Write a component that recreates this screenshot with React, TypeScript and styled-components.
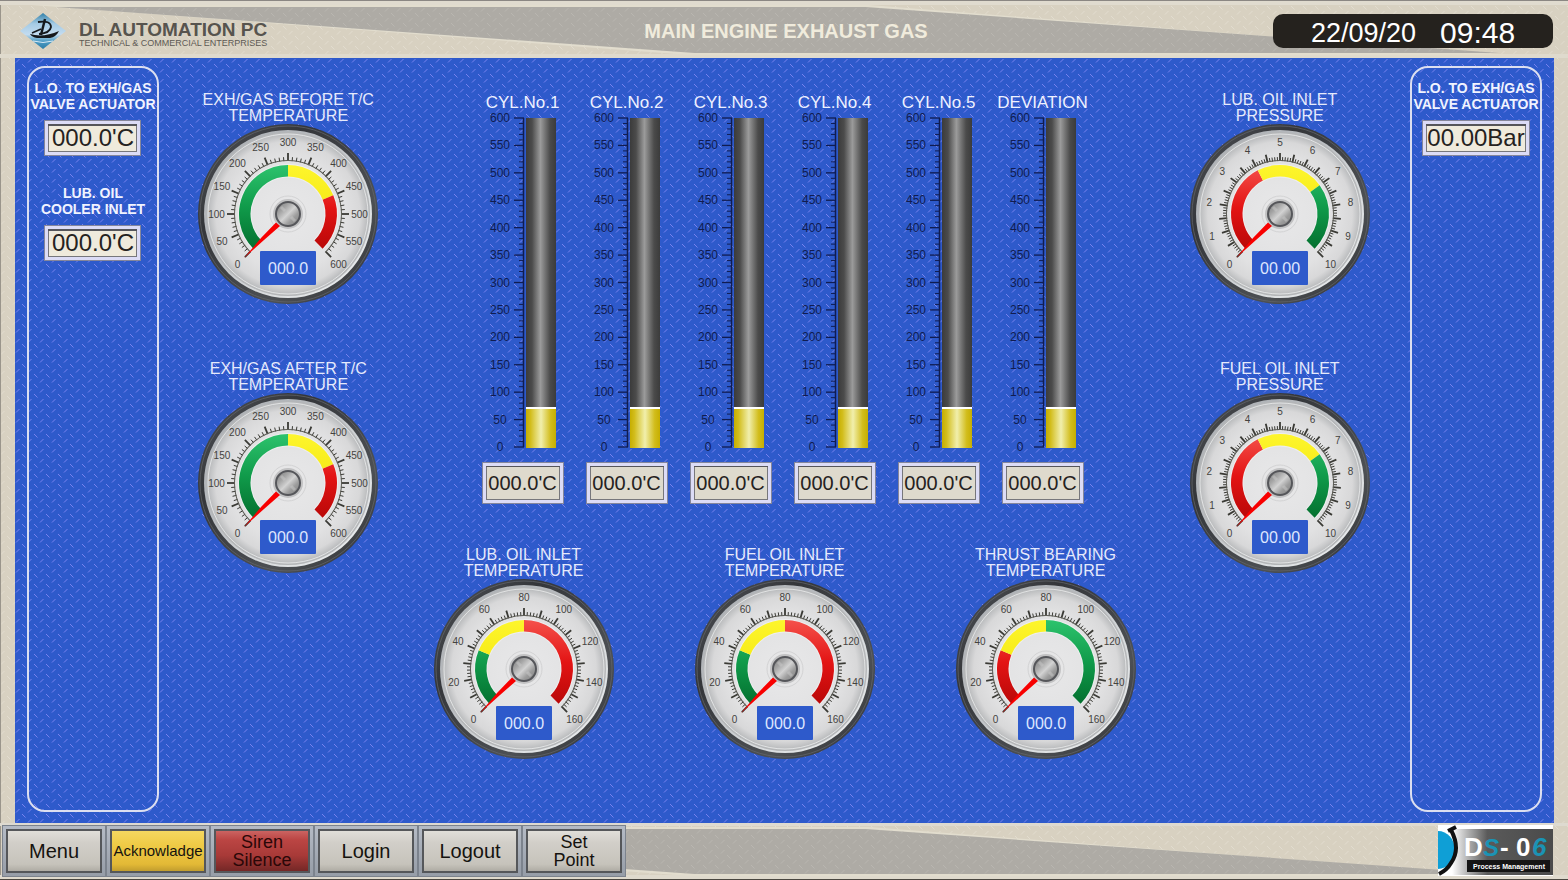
import React from "react";
import styled, { createGlobalStyle } from "styled-components";

const tread = (color: string) =>
  `url("data:image/svg+xml,${encodeURIComponent(
    `<svg xmlns='http://www.w3.org/2000/svg' width='12' height='10'><g stroke='${color}' stroke-width='1' fill='none'><path d='M1 4.5 L4.5 1'/><path d='M7 6 L10.5 9.5'/></g></svg>`
  )}")`;

const Global = createGlobalStyle`
  * { box-sizing: border-box; }
  body { margin: 0; font-family: "Liberation Sans", Arial, sans-serif; background: #d8d1c1; }
`;

const Page = styled.div`
  min-height: 100vh;
  display: flex;
  flex-direction: column;
  background: ${tread("#e2dccf")} #d8d1c1;
  box-shadow: inset 1px 0 #9a958b;
`;

const Band = styled.div`
  position: relative;
  isolation: isolate;
  &::before,
  &::after {
    content: "";
    position: absolute;
    z-index: -1;
    inset: 6px 0 5px;
  }
  &::before {
    z-index: -2;
    inset: 4px 0 3px;
    background: #e2ddce;
    clip-path: polygon(2% 0, 55.4% 0, 96.2% 100%, 44% 100%);
  }
  &::after {
    background: ${tread("#b9b6b0")} #aeaba5;
    clip-path: polygon(3.5% 0, 55.2% 0, 95.6% 100%, 44.3% 100%);
  }
`;

const Header = styled(Band).attrs({ as: "header" })`
  height: 58px;
  padding: 2px 15px 0 19px;
  display: grid;
  grid-template-columns: 1fr auto 1fr;
  align-items: center;
  border-top: 1px solid #8b8783;
  box-shadow: inset 0 4px #e0dbcf, inset 0 -4px #dfdacd;
`;

const Brand = styled.div`
  display: flex;
  align-items: center;
  gap: 12px;
`;

const BrandText = styled.div`
  display: flex;
  flex-direction: column;
  padding-top: 6px;
  white-space: nowrap;
`;

const BrandName = styled.strong`
  font-size: 19px;
  line-height: 18px;
  color: #57544e;
`;

const BrandTag = styled.span`
  font-size: 9px;
  line-height: 8px;
  color: #5d5a54;
`;

const Title = styled.h1`
  margin: 0;
  font-size: 20px;
  line-height: 24px;
  color: #f0ebdc;
`;

const Clock = styled.div`
  justify-self: end;
  width: 280px;
  height: 34px;
  display: flex;
  align-items: center;
  justify-content: center;
  gap: 24px;
  padding-top: 4px;
  border-radius: 10px;
  background: #25221e;
  color: #fff;
`;

const DateText = styled.time`
  font-size: 27px;
  line-height: 30px;
`;

const TimeText = styled.time`
  font-size: 30px;
  line-height: 30px;
`;

const Main = styled.main`
  flex: 1;
  margin: 0 14px 0 15px;
  padding: 8px 12px 11px;
  display: grid;
  grid-template-columns: 132px 1fr 702px 1fr 132px;
  background: ${tread("#7882ee")} #2e5acb;
`;

const Panel = styled.section`
  display: flex;
  flex-direction: column;
  align-items: center;
  padding-top: 12px;
  border: 2px solid #dcdff0;
  border-radius: 18px;
`;

const Reading = styled.div`
  display: flex;
  flex-direction: column;
  align-items: center;
  gap: 8px;
  margin-bottom: 29px;
`;

const PanelLabel = styled.label`
  font-size: 14px;
  font-weight: 700;
  line-height: 16px;
  text-align: center;
  white-space: pre;
  color: #f1f3ff;
`;

const Display = styled.output<{ $w: number; $large?: boolean }>`
  width: ${(p) => p.$w}px;
  height: ${(p) => (p.$large ? 36 : 42)}px;
  display: flex;
  align-items: center;
  justify-content: center;
  white-space: nowrap;
  font-size: ${(p) => (p.$large ? 24 : 20)}px;
  line-height: 24px;
  color: #25221e;
  background: ${(p) => (p.$large ? "#efeadc" : "#dedacd")};
  border: 1px solid #85869a;
  box-shadow: inset 0 0 0 3px #dcdcf6,
    inset 0 ${(p) => (p.$large ? 5 : 4)}px #55555a, inset 0 0 0 4px #77777b;
`;

const GaugeColumn = styled.div<{ $side: "left" | "right" }>`
  display: flex;
  flex-direction: column;
  align-items: center;
  gap: 57px;
  padding-top: 26px;
  padding-left: ${(p) => (p.$side === "right" ? 14 : 0)}px;
  padding-right: ${(p) => (p.$side === "left" ? 16 : 0)}px;
`;

const GaugeBox = styled.figure`
  margin: 0;
  width: 180px;
  display: flex;
  flex-direction: column;
  align-items: center;
  svg { display: block; }
`;

const GaugeTitle = styled.figcaption`
  font-size: 16px;
  line-height: 16px;
  text-align: center;
  white-space: pre;
  color: #e6eafc;
`;

const Center = styled.div`
  display: flex;
  flex-direction: column;
  padding-top: 29px;
`;

const Bars = styled.div`
  display: flex;
  justify-content: center;
  gap: 20px;
  padding-right: 4px;
`;

const BarItem = styled.div`
  width: 84px;
  display: flex;
  flex-direction: column;
  align-items: center;
  svg { display: block; margin-bottom: 6px; }
`;

const BarLabel = styled.label`
  font-size: 17px;
  line-height: 16px;
  color: #eef1ff;
  white-space: nowrap;
`;

const GaugeRow = styled.div`
  display: flex;
  justify-content: space-between;
  margin-top: 43px;
`;

const Footer = styled(Band).attrs({ as: "footer" })`
  height: 57px;
  padding: 2px 15px 0 2px;
  display: flex;
  justify-content: space-between;
  align-items: flex-start;
  border-bottom: 1px solid #4a4740;
  box-shadow: inset 0 3px #dedad0, inset 0 -4px #dfdacd;
`;

const Keys = styled.nav`
  display: flex;
`;

const faces = {
  grey: "linear-gradient(#e3e1dc, #d2cfc9 30%, #c6c3bb 80%, #a8a59d)",
  yellow: "linear-gradient(#f5d964, #efcb47 35%, #e3b936 80%, #b8952c)",
  red: "linear-gradient(#cf6a68, #bb4543 25%, #a83a38 60%, #6e2524)",
};

const Key = styled.button<{ $face: keyof typeof faces; $size: number }>`
  width: 104px;
  height: 52px;
  margin: 0;
  padding: 0;
  border: 4px solid;
  border-image: linear-gradient(#b4bac4, #979ea8) 1;
  background: ${(p) => faces[p.$face]} padding-box;
  outline: 1px solid #7c838d;
  outline-offset: -1px;
  box-shadow: inset 0 0 0 2px #55575a;
  font-family: inherit;
  font-size: ${(p) => p.$size}px;
  line-height: 18px;
  color: ${(p) => (p.$face === "red" ? "#2a0808" : "#15130f")};
  white-space: pre;
`;

type Zone = [number, number, string];

const polar = (r: number, deg: number): [number, number] => {
  const a = (deg * Math.PI) / 180;
  return [r * Math.sin(a), -r * Math.cos(a)];
};

const band = (r1: number, r2: number, a: number, b: number) => {
  const large = b - a > 180 ? 1 : 0;
  const p = [polar(r2, a), polar(r2, b), polar(r1, b), polar(r1, a)].map((q) =>
    q.map((n) => n.toFixed(2)).join(" ")
  );
  return `M${p[0]} A${r2} ${r2} 0 ${large} 1 ${p[1]} L${p[2]} A${r1} ${r1} 0 ${large} 0 ${p[3]} Z`;
};

function Defs() {
  return (
    <svg width="0" height="0" style={{ position: "absolute" }} aria-hidden="true">
      <defs>
        <linearGradient id="bezel" x1="0" y1="0" x2="1" y2="1">
          <stop offset="0" stopColor="#53565a" />
          <stop offset=".3" stopColor="#34363a" />
          <stop offset=".7" stopColor="#4d5054" />
          <stop offset="1" stopColor="#2f3134" />
        </linearGradient>
        <linearGradient id="lip" x1="0" y1="0" x2="1" y2="1">
          <stop offset="0" stopColor="#a9adb1" />
          <stop offset=".4" stopColor="#b9bcc0" />
          <stop offset=".6" stopColor="#d5d8da" />
          <stop offset="1" stopColor="#eff1f2" />
        </linearGradient>
        <radialGradient id="face">
          <stop offset="0" stopColor="#e8e8e9" />
          <stop offset=".7" stopColor="#e1e1e2" />
          <stop offset=".88" stopColor="#d8d8d9" />
          <stop offset="1" stopColor="#b2b4b6" />
        </radialGradient>
        <linearGradient id="green" gradientUnits="userSpaceOnUse" x1="0" y1="-48" x2="0" y2="35">
          <stop offset="0" stopColor="#2cc26c" />
          <stop offset=".5" stopColor="#109a4a" />
          <stop offset="1" stopColor="#04702f" />
        </linearGradient>
        <linearGradient id="red" gradientUnits="userSpaceOnUse" x1="0" y1="-48" x2="0" y2="35">
          <stop offset="0" stopColor="#f4504a" />
          <stop offset=".5" stopColor="#e31414" />
          <stop offset="1" stopColor="#b90808" />
        </linearGradient>
        <linearGradient id="yellow" gradientUnits="userSpaceOnUse" x1="0" y1="-48" x2="0" y2="35">
          <stop offset="0" stopColor="#fdf52c" />
          <stop offset="1" stopColor="#efe000" />
        </linearGradient>
        <linearGradient id="hub" x1="0" y1="0" x2="1" y2="1">
          <stop offset="0" stopColor="#777" />
          <stop offset=".3" stopColor="#a5a5a5" />
          <stop offset=".5" stopColor="#d2d2d2" />
          <stop offset=".7" stopColor="#9c9c9c" />
          <stop offset="1" stopColor="#7d7d7d" />
        </linearGradient>
        <linearGradient id="tube">
          <stop offset="0" stopColor="#3b3b3b" />
          <stop offset=".2" stopColor="#4b4b4b" />
          <stop offset=".48" stopColor="#9b9b9b" />
          <stop offset=".8" stopColor="#4b4b4b" />
          <stop offset="1" stopColor="#3b3b3b" />
        </linearGradient>
        <linearGradient id="fill">
          <stop offset="0" stopColor="#c6ae00" />
          <stop offset=".15" stopColor="#d2bd1c" />
          <stop offset=".5" stopColor="#f1efac" />
          <stop offset=".82" stopColor="#d2bd1c" />
          <stop offset="1" stopColor="#c6ae00" />
        </linearGradient>
      </defs>
    </svg>
  );
}

interface GaugeProps {
  title: string;
  max: number;
  major: number;
  label: number;
  zones: Zone[];
  value: string;
}

function Gauge({ title, max, major, label, zones, value }: GaugeProps) {
  const angle = (v: number) => -135 + (270 * v) / max;
  const majors = Math.round(max / major);
  const ticks = Array.from({ length: majors * 5 + 1 }, (_, i) => i);
  const labels = Array.from({ length: Math.round(max / label) + 1 }, (_, i) => i * label);
  return (
    <GaugeBox>
      <GaugeTitle>{title}</GaugeTitle>
      <svg width="180" height="180" viewBox="-90 -90 180 180" role="img" aria-label={title.replace("\n", " ")}>
        <circle r="90" fill="url(#bezel)" />
        <circle r="88" fill="none" stroke="#65686c" strokeWidth="1" opacity=".7" />
        <circle r="84" fill="url(#lip)" />
        <circle r="82" fill="url(#face)" />
        <circle r="80" fill="none" stroke="#f2f3f4" strokeWidth="1" opacity=".7" />
        {ticks.map((i) => {
          const a = -135 + (270 * i) / (majors * 5);
          const big = i % 5 === 0;
          const [x1, y1] = polar(53, a);
          const [x2, y2] = polar(big ? 61 : 57, a);
          return <line key={i} x1={x1} y1={y1} x2={x2} y2={y2} stroke="#3a3a35" strokeWidth={big ? 1.8 : 1} />;
        })}
        <path d={band(53, 54, -135, 135)} fill="#5c5c55" />
        {labels.map((v) => {
          const [x, y] = polar(71.5, angle(v));
          return (
            <text key={v} x={x} y={y + 3.5} fontSize="10" textAnchor="middle" fill="#44433f">
              {v}
            </text>
          );
        })}
        <path d={band(36.5, 50, -135, 135)} fill="#ededee" />
        {zones.map(([a, b, c]) => (
          <path key={a} d={band(37.5, 49, angle(a), angle(b))} fill={`url(#${c})`} />
        ))}
        <circle r="18" fill="none" stroke="#d3d3d4" strokeWidth="1" />
        <circle r="15" fill="#c2c2c3" />
        <circle r="12" fill="url(#hub)" stroke="#55565a" strokeWidth="2" />
        <path d="M-3 -3 L-7 -7 M3 3 L7 7" stroke="#c9c9c9" strokeWidth="3" opacity=".5" />
        <path d="M-12 8.5 L-8 12 L-24 26 L-44 44 L-27 24 Z" fill="#f80000" />
        <rect x="-28" y="37" width="56" height="34" rx="1" fill="#2e5acb" />
        <text y="60" fontSize="16" textAnchor="middle" fill="#dfe7ff">
          {value}
        </text>
      </svg>
    </GaugeBox>
  );
}

function Bar({ label, value, id }: { label: string; value: string; id: string }) {
  const top = 7;
  const bottom = 336;
  const y = (v: number) => bottom - ((bottom - top) * v) / 600;
  return (
    <BarItem>
      <BarLabel htmlFor={id}>{label}</BarLabel>
      <svg width="82" height="345" viewBox="0 0 82 345" aria-hidden="true">
        {Array.from({ length: 13 }, (_, i) => i * 50).map((v) => (
          <text key={v} x="18" y={y(v) + 4} fontSize="12" textAnchor="middle" fill="#101c50">
            {v}
          </text>
        ))}
        {Array.from({ length: 61 }, (_, i) => i).map((i) => (
          <line key={i} x1={i % 5 === 0 ? 32 : 37} x2="42" y1={y(i * 10)} y2={y(i * 10)} stroke="#101c50" strokeWidth={i % 5 === 0 ? 1.3 : 1} />
        ))}
        <line x1="41.5" x2="41.5" y1={top} y2={bottom} stroke="#101c50" strokeWidth="1.5" />
        <rect x="44" y={top} width="30" height={bottom - top} fill="url(#tube)" />
        <rect x="44" y="297" width="30" height={bottom - 297 + 1} fill="url(#fill)" />
        <rect x="44" y="296" width="30" height="2" fill="#fff" />
      </svg>
      <Display id={id} $w={82}>{value}</Display>
    </BarItem>
  );
}

const bars = ["CYL.No.1", "CYL.No.2", "CYL.No.3", "CYL.No.4", "CYL.No.5", "DEVIATION"];

const exhaustZones: Zone[] = [[0, 300, "green"], [300, 450, "yellow"], [450, 600, "red"]];
const pressureZones: Zone[] = [[0, 4, "red"], [4, 7, "yellow"], [7, 10, "green"]];
const inletZones: Zone[] = [[0, 40, "green"], [40, 80, "yellow"], [80, 160, "red"]];
const thrustZones: Zone[] = [[0, 40, "red"], [40, 80, "yellow"], [80, 160, "green"]];

const exhaust = { max: 600, major: 50, label: 50, zones: exhaustZones, value: "000.0" };
const pressure = { max: 10, major: 0.5, label: 1, zones: pressureZones, value: "00.00" };
const temp = { max: 160, major: 10, label: 20, zones: inletZones, value: "000.0" };

const keys: { text: string; face: keyof typeof faces; size: number }[] = [
  { text: "Menu", face: "grey", size: 20 },
  { text: "Acknowladge", face: "yellow", size: 15 },
  { text: "Siren\nSilence", face: "red", size: 18 },
  { text: "Login", face: "grey", size: 20 },
  { text: "Logout", face: "grey", size: 20 },
  { text: "Set\nPoint", face: "grey", size: 18 },
];

function DiamondLogo() {
  return (
    <svg width="48" height="36" viewBox="0 0 48 36" aria-hidden="true">
      <defs>
        <linearGradient id="sea" x1="0" y1="0" x2="0" y2="1">
          <stop offset="0" stopColor="#2f7fa8" />
          <stop offset=".3" stopColor="#a5cbe5" />
          <stop offset=".6" stopColor="#c3dcf0" />
          <stop offset=".78" stopColor="#4f9dc6" />
          <stop offset="1" stopColor="#2a7ba6" />
        </linearGradient>
      </defs>
      <path d="M24 0 L47 18 L24 36 L1 18 Z" fill="url(#sea)" />
      <path d="M11 21 Q24 25 40 18 Q37 24 31 25 L18 25 Q13 24 11 21 Z" fill="#15181c" />
      <path d="M26 6 L22 22" stroke="#15181c" strokeWidth="2.4" fill="none" />
      <path d="M19 9 Q32 7 32 14 Q31 20 20 21" stroke="#15181c" strokeWidth="1.8" fill="none" />
      <path d="M13 20 L22 16" stroke="#15181c" strokeWidth="1.4" />
      <path d="M14 28 Q24 31 34 28" stroke="#d7e9f4" strokeWidth="1" fill="none" />
    </svg>
  );
}

function DsLogo() {
  return (
    <svg width="115" height="51" viewBox="0 0 115 51" role="img" aria-label="DS-06 Process Management">
      <defs>
        <linearGradient id="plate">
          <stop offset="0" stopColor="#fff" />
          <stop offset=".15" stopColor="#b5b5b5" />
          <stop offset=".35" stopColor="#5a5a5a" />
          <stop offset="1" stopColor="#4a4a4a" />
        </linearGradient>
      </defs>
      <rect width="115" height="51" fill="#fff" />
      <rect x="14" y="4" width="101" height="46" fill="url(#plate)" />
      <path d="M0 6 A17 19 0 0 1 0 44 Z" fill="#0f9fd6" />
      <path d="M13 5 Q23 24 13 38 Q9 45 1 49" fill="none" stroke="#111" strokeWidth="4" />
      <path d="M10 6 L18 2" stroke="#111" strokeWidth="4" />
      <rect x="29" y="35" width="83" height="12" fill="#151515" />
      <g fontSize="26" fontWeight="700" fontFamily="'Liberation Sans', sans-serif">
        <text x="26" y="31" fill="#fff">D</text>
        <text x="45" y="31" fill="#1b93b4" fontStyle="italic" fontSize="24">S</text>
        <text x="62" y="31" fill="#fff">-</text>
        <text x="78" y="31" fill="#fff">0</text>
        <text x="94" y="31" fill="#1b93b4" fontStyle="italic">6</text>
      </g>
      <text x="71" y="44" fontSize="7" fontWeight="700" textAnchor="middle" fill="#fff">
        Process Management
      </text>
    </svg>
  );
}

export default function App() {
  return (
    <Page>
      <Global />
      <Defs />
      <Header>
        <Brand>
          <DiamondLogo />
          <BrandText>
            <BrandName>DL AUTOMATION PC</BrandName>
            <BrandTag>TECHNICAL &amp; COMMERCIAL ENTERPRISES</BrandTag>
          </BrandText>
        </Brand>
        <Title>MAIN ENGINE EXHAUST GAS</Title>
        <Clock>
          <DateText>22/09/20</DateText>
          <TimeText>09:48</TimeText>
        </Clock>
      </Header>
      <Main>
        <Panel>
          <Reading>
            <PanelLabel htmlFor="valve-temp">{"L.O. TO EXH/GAS\nVALVE ACTUATOR"}</PanelLabel>
            <Display id="valve-temp" $w={97} $large>000.0'C</Display>
          </Reading>
          <Reading>
            <PanelLabel htmlFor="cooler-temp">{"LUB. OIL\nCOOLER INLET"}</PanelLabel>
            <Display id="cooler-temp" $w={97} $large>000.0'C</Display>
          </Reading>
        </Panel>
        <GaugeColumn $side="left">
          <Gauge title={"EXH/GAS BEFORE T/C\nTEMPERATURE"} {...exhaust} />
          <Gauge title={"EXH/GAS AFTER T/C\nTEMPERATURE"} {...exhaust} />
        </GaugeColumn>
        <Center>
          <Bars>
            {bars.map((name, i) => (
              <Bar key={name} id={`bar-${i}`} label={name} value="000.0'C" />
            ))}
          </Bars>
          <GaugeRow>
            <Gauge title={"LUB. OIL INLET\nTEMPERATURE"} {...temp} />
            <Gauge title={"FUEL OIL INLET\nTEMPERATURE"} {...temp} />
            <Gauge title={"THRUST BEARING\nTEMPERATURE"} {...temp} zones={thrustZones} />
          </GaugeRow>
        </Center>
        <GaugeColumn $side="right">
          <Gauge title={"LUB. OIL INLET\nPRESSURE"} {...pressure} />
          <Gauge title={"FUEL OIL INLET\nPRESSURE"} {...pressure} />
        </GaugeColumn>
        <Panel>
          <Reading>
            <PanelLabel htmlFor="valve-pressure">{"L.O. TO EXH/GAS\nVALVE ACTUATOR"}</PanelLabel>
            <Display id="valve-pressure" $w={108} $large>00.00Bar</Display>
          </Reading>
        </Panel>
      </Main>
      <Footer>
        <Keys>
          {keys.map((k) => (
            <Key key={k.text} type="button" $face={k.face} $size={k.size}>
              {k.text}
            </Key>
          ))}
        </Keys>
        <DsLogo />
      </Footer>
    </Page>
  );
}
